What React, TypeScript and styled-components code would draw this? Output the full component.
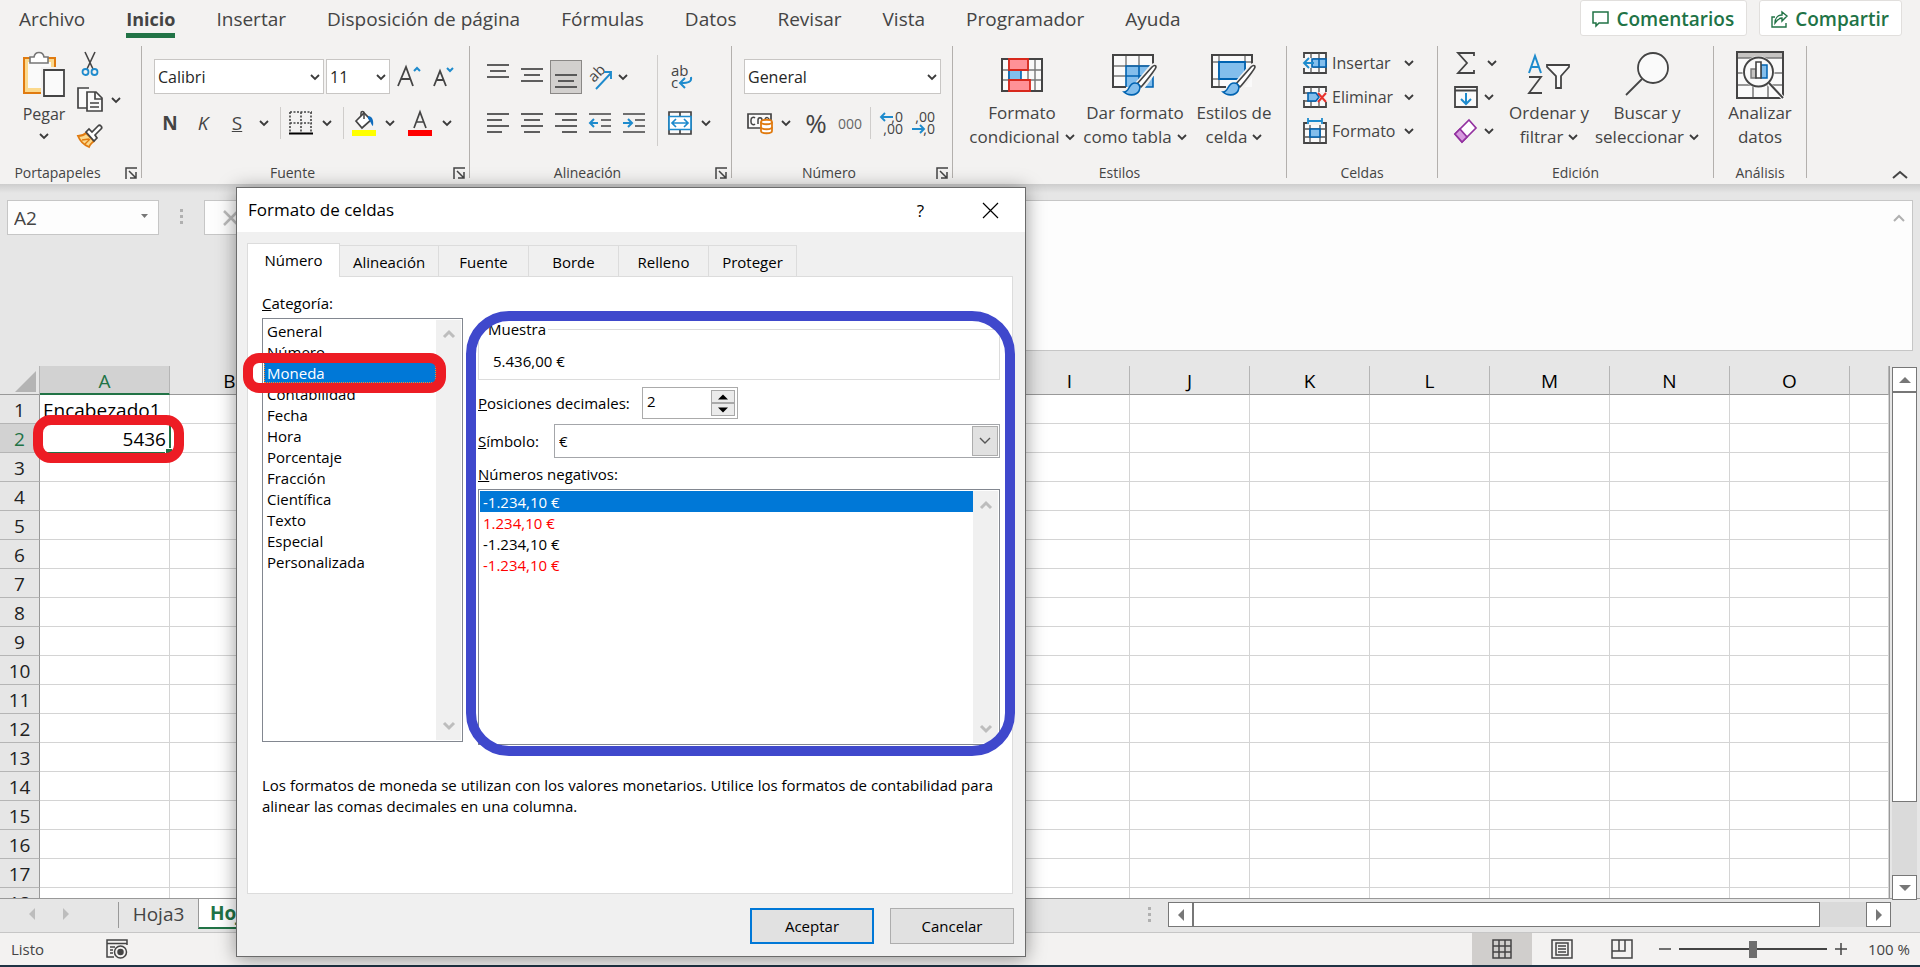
import React from "react";
import styled, { createGlobalStyle, css } from "styled-components";

const GREEN = "#217346";
const INK = "#444444";
const BLUE = "#1e8bcd";

const GlobalStyle = createGlobalStyle`
  *, *::before, *::after { box-sizing: border-box; }
  body { margin: 0; background: #e6e6e6; overflow: hidden; }
  body, button, input, select { font-family: "Open Sans", "Noto Sans", sans-serif; }
  button { border: 0; background: none; padding: 0; margin: 0; color: inherit; cursor: pointer; }
  svg { display: block; flex: none; overflow: visible; }
`;

const Page = styled.div`
  position: relative;
  display: flex;
  flex-direction: column;
  height: 100vh;
  color: ${INK};
`;

/* ---------- ribbon ---------- */

const Header = styled.header`
  background: #f3f2f1;
`;

const TabStrip = styled.nav`
  display: flex;
  height: 38px;
  padding: 0 18px 0 19px;
  gap: 41px;
`;

const RibbonTab = styled.a<{ $active?: boolean }>`
  color: ${INK};
  font-size: 19px;
  line-height: 38px;
  height: 38px;
  text-decoration: none;
  white-space: nowrap;
  font-weight: ${(p) => (p.$active ? 700 : 400)};
  ${(p) => p.$active && css`font-size: 18px; box-shadow: inset 0 -5px 0 ${GREEN};`}
`;

const StripActions = styled.div`
  display: flex;
  gap: 12px;
  margin-left: auto;
`;

const ShareButton = styled.button`
  display: flex;
  align-items: center;
  gap: 7px;
  height: 36px;
  padding: 1px 12px 0 11px;
  border: 1px solid #e1dfdd;
  border-radius: 3px;
  background: #fff;
  color: ${GREEN};
  font-size: 19px;
  font-weight: 600;
`;

const Ribbon = styled.div`
  display: flex;
  height: 146px;
  padding-top: 8px;
`;

const Group = styled.section<{ $w: number }>`
  display: flex;
  flex-direction: column;
  flex: 0 0 ${(p) => p.$w}px;
  background: linear-gradient(#b3b0ad, #b3b0ad) right top / 1px 132px no-repeat;
`;

const GroupBody = styled.div<{ $pad?: number }>`
  display: flex;
  height: 116px;
  padding-left: ${(p) => p.$pad ?? 0}px;
`;

const GroupFooter = styled.div`
  display: flex;
  align-items: center;
  height: 22px;
  padding-right: 1px;
  font-size: 14px;
  line-height: 20px;

  button { margin: 0 4px 0 10px; }
`;

const GroupName = styled.span`
  flex: 1;
  text-align: center;
  white-space: nowrap;
`;

const Rows = styled.div<{ $top?: number; $gap?: number }>`
  display: flex;
  flex-direction: column;
  padding-top: ${(p) => p.$top ?? 0}px;
  gap: ${(p) => p.$gap ?? 0}px;
`;

const Row = styled.div<{ $h?: number }>`
  display: flex;
  align-items: center;
  height: ${(p) => p.$h ?? 36}px;
`;

const Tool = styled.button<{ $w?: number; $h?: number }>`
  display: flex;
  align-items: center;
  justify-content: center;
  width: ${(p) => p.$w ?? 34}px;
  height: ${(p) => p.$h ?? 34}px;
  flex: none;
`;

const PressedTool = styled(Tool)`
  width: 32px;
  margin: 0 1px;
  border: 1px solid #8a8886;
  background: #d2d0ce;
`;

const LetterTool = styled(Tool)`
  font-size: 19px;
  line-height: 24px;
`;

const Percent = styled(Tool)`
  font-size: 26px;
`;

const Thousands = styled(Tool)`
  font-size: 14px;
  color: #666;
`;

const Rule = styled.span<{ $w: number; $h?: number }>`
  flex: none;
  width: ${(p) => p.$w}px;
  height: ${(p) => p.$h ?? 32}px;
  background: linear-gradient(#cfcdcb, #cfcdcb) center / 1px 100% no-repeat;
`;

const TallRule = styled(Rule)`
  height: 91px;
  margin-top: 9px;
`;

const ComboBox = styled.div<{ $w: number }>`
  position: relative;
  width: ${(p) => p.$w}px;
  height: 35px;
  margin-right: 2px;

  select {
    width: 100%;
    height: 100%;
    padding: 1px 0 0 3px;
    border: 1px solid #c8c6c4;
    border-radius: 0;
    background: #fff;
    color: #262626;
    font-size: 16px;
    appearance: none;
    outline: 0;
  }
  svg {
    position: absolute;
    right: 4px;
    top: 13px;
    pointer-events: none;
  }
`;

const BigButton = styled.button<{ $w: number; $top?: number }>`
  display: flex;
  flex-direction: column;
  align-items: center;
  width: ${(p) => p.$w}px;
  padding-top: 3px;
  font-size: 17px;
  line-height: 24px;
  white-space: nowrap;
`;

const BigIcon = styled.span`
  display: flex;
  align-items: center;
  justify-content: center;
  height: 52px;
`;

const BigLine = styled.span`
  display: flex;
  align-items: center;
  gap: 5px;
`;

const PasteButton = styled.button`
  display: flex;
  flex-direction: column;
  align-items: center;
  width: 64px;
  padding-top: 5px;
  font-size: 16px;
  line-height: 22px;
  gap: 6px;
`;

const CellButton = styled.button`
  display: flex;
  align-items: center;
  width: 128px;
  height: 34px;
  gap: 5px;
  font-size: 16px;
  text-align: left;

  span { width: 67px; }
`;

const Collapse = styled.button`
  align-self: flex-end;
  margin: 0 12px 4px auto;
`;

/* ---------- formula bar ---------- */

const FormulaBar = styled.div`
  display: flex;
  align-items: flex-start;
  height: 182px;
  padding: 16px 7px 0 7px;
  background: linear-gradient(#cdcdcd, #e6e6e6 9px);
`;

const NameBox = styled.label`
  position: relative;
  width: 152px;
  height: 35px;

  input {
    width: 100%;
    height: 100%;
    padding: 0 6px;
    border: 1px solid #c6c6c6;
    background: #fdfdfd;
    color: ${INK};
    font-size: 19px;
    outline: 0;
  }
  svg { position: absolute; right: 11px; top: 14px; }
`;

const Grip = styled.span<{ $m: number }>`
  width: 3px;
  height: 15px;
  margin: 9px ${(p) => p.$m}px 0;
  background: repeating-linear-gradient(#b0b0b0 0 3px, transparent 3px 6px);
`;

const BarGrip = styled(Grip)`
  margin-top: 8px;
  margin-right: 5px;
`;

const FormulaButtons = styled.div`
  display: flex;
  align-items: center;
  width: 110px;
  height: 35px;
  padding-left: 18px;
  border: 1px solid #c6c6c6;
  background: #fdfdfd;
`;

const FormulaField = styled.div`
  display: flex;
  flex: 1;
  height: 151px;
  margin-left: 4px;
  border: 1px solid #c6c6c6;
  background: #fdfdfd;

  input { flex: 1; border: 0; outline: 0; background: none; font-size: 19px; }
  button { align-self: flex-start; margin: 13px 7px 0 0; }
`;

/* ---------- sheet ---------- */

const SheetArea = styled.main`
  display: flex;
  flex: 1;
  min-height: 0;
`;

const GridFrame = styled.div`
  flex: 1;
  min-width: 0;
  overflow: hidden;
  border-right: 1px solid #999;
`;

const Grid = styled.table`
  width: 100%;
  table-layout: fixed;
  border-collapse: separate;
  border-spacing: 0;
  font-size: 19px;
  line-height: 24px;
  color: #000;

  th, td { padding: 2px 0 0; height: 29px; font-weight: 400; }
  thead th {
    border-right: 1px solid #b5b5b5;
    border-bottom: 1px solid #999;
    background: #e6e6e6;
  }
  td {
    background: #fff;
    border-right: 1px solid #d4d4d4;
    border-bottom: 1px solid #d4d4d4;
  }
`;

const ColumnHead = styled.th<{ $on?: boolean }>`
  ${(p) => p.$on && css`
    && { background: #d2d2d2; color: ${GREEN}; border-bottom: 2px solid ${GREEN}; }
  `}
`;

const CornerHead = styled.th`
  svg { margin-left: 15px; }
`;

const RowHead = styled.th<{ $on?: boolean }>`
  background: ${(p) => (p.$on ? "#d2d2d2" : "#e6e6e6")};
  color: ${(p) => (p.$on ? GREEN : "#222")};
  border-right: 1px solid #999;
  border-bottom: 1px solid #b5b5b5;
`;

const TextCell = styled.td`
  && { padding-left: 3px; white-space: nowrap; }
`;

const ActiveCell = styled.td`
  position: relative;
  && { padding-right: 3px; text-align: right; }

  &::before {
    content: "";
    position: absolute;
    inset: -2px -2px -2px -2px;
    border: 2px solid ${GREEN};
  }
  &::after {
    content: "";
    position: absolute;
    right: -3px;
    bottom: -3px;
    width: 7px;
    height: 7px;
    background: ${GREEN};
    border: 1px solid #fff;
    border-width: 1px 0 0 1px;
  }
`;

const VScroll = styled.div`
  display: flex;
  flex-direction: column;
  width: 25px;
  margin: 1px 3px -2px 2px;
  background: #dadada;
  z-index: 1;
`;

const ScrollButton = styled.button`
  display: flex;
  align-items: center;
  justify-content: center;
  flex: none;
  width: 25px;
  height: 25px;
  border: 1px solid #777;
  background: #fff;
`;

const VThumb = styled.div`
  flex: 410 1 0;
  border: 1px solid #777;
  background: #fff;
`;

const Track = styled.div<{ $grow: number }>`
  flex: ${(p) => p.$grow} 1 0;
`;

const TabBar = styled.div`
  display: flex;
  align-items: flex-start;
  height: 35px;
  border-top: 1px solid #999;
  border-bottom: 1px solid #c6c6c6;
  background: #e6e6e6;
`;

const SheetNav = styled.div`
  display: flex;
  align-items: center;
  gap: 22px;
  width: 118px;
  height: 30px;
  padding-left: 26px;
`;

const SheetTab = styled.button<{ $active?: boolean }>`
  height: ${(p) => (p.$active ? 30 : 26)}px;
  padding: 0 12px;
  font-size: 19px;
  line-height: 22px;
  color: ${INK};
  border-left: 1px solid #999;
  ${(p) =>
    p.$active
      ? css`
          padding: 0 11px;
          background: #fff;
          color: ${GREEN};
          font-weight: 700;
          border-bottom: 2px solid ${GREEN};
        `
      : css`
          width: 80px;
          margin-top: 3px;
          padding-bottom: 3px;
        `}
`;

const HScroll = styled.div`
  display: flex;
  width: 723px;
  height: 25px;
  margin: 3px 29px 0 0;
  background: #dadada;
`;

const HThumb = styled.div`
  flex: 627 1 0;
  border: 1px solid #777;
  background: #fff;
`;

const StatusBar = styled.footer`
  display: flex;
  align-items: center;
  height: 34px;
  padding: 0 10px 0 11px;
  border-bottom: 2px solid #1f3344;
  background: #f3f2f1;
  font-size: 15px;
  color: ${INK};
`;

const StatusText = styled.span`
  width: 95px;
`;

const Views = styled.div`
  display: flex;
  margin: 0 7px 0 auto;
`;

const ViewButton = styled.button<{ $on?: boolean }>`
  display: flex;
  align-items: center;
  justify-content: center;
  width: 60px;
  height: 32px;
  background: ${(p) => (p.$on ? "#d0cecc" : "none")};
`;

const ZoomRange = styled.input`
  width: 148px;
  height: 18px;
  margin: 0 8px;
  appearance: none;
  background: linear-gradient(#444, #444) center / 100% 2px no-repeat;

  &::-webkit-slider-thumb {
    appearance: none;
    width: 8px;
    height: 17px;
    background: #6e6e6e;
  }
`;

const ZoomValue = styled.span`
  width: 63px;
  text-align: right;
`;

/* ---------- dialog ---------- */

const Dialog = styled.section`
  position: absolute;
  left: 236px;
  top: 187px;
  width: 790px;
  border: 1px solid #6b6b6b;
  background: #f0f0f0;
  box-shadow: 0 2px 18px rgba(0, 0, 0, 0.4);
  color: #000;
  font-size: 15px;
  line-height: 20px;
  z-index: 2;
`;

const TitleBar = styled.div`
  display: flex;
  align-items: center;
  height: 44px;
  padding: 0 26px 0 11px;
  background: #fff;

  h2 { flex: 1; margin: 0; font-size: 17px; line-height: 24px; font-weight: 400; }
`;

const HelpButton = styled.button`
  margin-right: 58px;
  font-size: 17px;
`;

const DialogTabs = styled.div`
  display: flex;
  align-items: flex-end;
  height: 44px;
  padding: 0 10px;
`;

const DialogTab = styled.button<{ $w: number; $active?: boolean }>`
  width: ${(p) => p.$w}px;
  height: 31px;
  border: 1px solid #dcdcdc;
  border-width: 1px 1px 0 0;
  font-size: 15px;
  padding-top: 2px;
  ${(p) => p.$active && css`
    position: relative;
    height: 34px;
    margin-bottom: -1px;
    padding: 0 0 1px;
    border-width: 1px 1px 0 1px;
    background: #fff;
  `}
`;

const Panel = styled.div`
  height: 618px;
  margin: 0 12px 0 10px;
  padding: 16px 12px 0 14px;
  border: 1px solid #dcdcdc;
  background: #fff;
`;

const Columns = styled.div`
  display: flex;
  gap: 15px;
`;

const CategoryColumn = styled.div`
  width: 201px;
`;

const OptionsColumn = styled.div`
  flex: 1;
  padding-top: 26px;
`;

const ListBox = styled.div<{ $h: number; $top: number }>`
  display: flex;
  height: ${(p) => p.$h}px;
  margin-top: ${(p) => p.$top}px;
  padding: 1px;
  border: 1px solid #828790;

  ul { flex: 1; margin: 0; padding: 0; list-style: none; }
`;

const Option = styled.li<{ $on?: boolean; $red?: boolean; $dotted?: boolean }>`
  height: 21px;
  padding: 1px 0 0 3px;
  line-height: 20px;
  color: ${(p) => (p.$on ? "#fff" : p.$red ? "#f00" : "#000")};
  background: ${(p) => (p.$on ? "#0078d7" : "none")};
  outline: ${(p) => (p.$dotted ? "1px dotted #ff8728" : "0")};
  outline-offset: -1px;
`;

const ListScroll = styled.div`
  display: flex;
  flex-direction: column;
  align-items: center;
  justify-content: space-between;
  width: 25px;
  padding: 8px 0;
  background: #f0f0f0;
`;

const Sample = styled.fieldset`
  height: 61px;
  margin: 0;
  padding: 11px 7px 0;
  border: 1px solid #dcdcdc;

  legend { padding: 0 2px; }
  output { display: block; padding-left: 7px; line-height: 22px; }
`;

const Field = styled.div<{ $top: number; $h: number; $label: number }>`
  display: flex;
  align-items: center;
  height: ${(p) => p.$h}px;
  margin-top: ${(p) => p.$top}px;

  label { width: ${(p) => p.$label}px; flex: none; }
`;

const Spinner = styled.div`
  display: flex;
  width: 96px;
  height: 32px;
  padding: 2px;
  border: 1px solid #ababab;

  input { flex: 1; min-width: 0; border: 0; padding: 0 2px 4px; font-size: 15px; outline: 0; }
`;

const SpinButtons = styled.div`
  display: grid;
  grid-template-rows: 1fr 1fr;
  width: 24px;

  button {
    display: flex;
    align-items: center;
    justify-content: center;
    border: 1px solid #a9a9a9;
    background: #ebebeb;
  }
`;

const SymbolSelect = styled.div`
  position: relative;
  flex: 1;
  height: 34px;

  select {
    width: 100%;
    height: 100%;
    padding: 0 4px;
    border: 1px solid #a4a6aa;
    border-radius: 0;
    background: #fff;
    color: #000;
    font-size: 15px;
    appearance: none;
  }
  span {
    position: absolute;
    top: 2px;
    right: 2px;
    bottom: 2px;
    display: flex;
    align-items: center;
    justify-content: center;
    width: 26px;
    border: 1px solid #adadad;
    background: #e1e1e1;
    pointer-events: none;
  }
`;

const NegativeLabel = styled.div`
  margin-top: 6px;
`;

const Description = styled.p`
  margin: 30px 0 0;
  line-height: 21px;
`;

const DialogFooter = styled.div`
  display: flex;
  justify-content: flex-end;
  gap: 16px;
  padding: 14px 11px 12px 0;
`;

const DialogButton = styled.button<{ $primary?: boolean }>`
  width: 124px;
  height: 36px;
  border: ${(p) => (p.$primary ? "2px solid #0078d7" : "1px solid #adadad")};
  background: #e1e1e1;
  font-size: 15px;
`;

const Ring = styled.div<{ $x: number; $y: number; $w: number; $h: number; $r: number; $color: string }>`
  position: absolute;
  left: ${(p) => p.$x}px;
  top: ${(p) => p.$y}px;
  width: ${(p) => p.$w}px;
  height: ${(p) => p.$h}px;
  border: 10px solid ${(p) => p.$color};
  border-radius: ${(p) => p.$r}px;
  pointer-events: none;
  z-index: 3;
`;

/* ---------- icons ---------- */

const Chev = () => (
  <svg width="10" height="10" viewBox="0 0 10 10" fill="none" stroke="#3b3b3b" strokeWidth="1.8">
    <path d="M1 3l4 4 4-4" />
  </svg>
);

const ListChev = ({ up }: { up?: boolean }) => (
  <svg width="12" height="12" viewBox="0 0 12 12" fill="none" stroke="#bdbdbd" strokeWidth="3">
    <path d={up ? "M1 9l5-5 5 5" : "M1 3l5 5 5-5"} />
  </svg>
);

const Tri = ({ dir, color = "#777", size = 12 }: { dir: "up" | "down" | "left" | "right"; color?: string; size?: number }) => {
  const d = { up: "M0 9h12L6 3z", down: "M0 3h12L6 9z", left: "M9 0v12L3 6z", right: "M3 0v12l6-6z" }[dir];
  return (
    <svg width={size} height={size} viewBox="0 0 12 12" fill={color}>
      <path d={d} />
    </svg>
  );
};

const Launcher = () => (
  <svg width="12" height="12" viewBox="0 0 12 12" fill="none" stroke={INK} strokeWidth="1.5">
    <path d="M1 12V1h11M4 4l7 7M11 5v6H5" />
  </svg>
);

const PasteIcon = () => (
  <svg width="42" height="46" viewBox="0 0 42 46" fill="none">
    <path d="M1 7h31v11H20v24H1z" fill="#fbd98d" stroke="#e07b10" strokeWidth="2" />
    <path d="M5 11h23v8h-8v18H5z" fill="#fafafa" />
    <path d="M18 16h24v30H18z" fill="#f3f2f1" />
    <path d="M7 12V6h4c1-6 9-6 10 0h4v6z" fill="#fff" stroke="#777" strokeWidth="1.6" />
    <path d="M21 19h20v26H21z" fill="#fafafa" stroke="#444" strokeWidth="1.8" />
  </svg>
);

const CutIcon = () => (
  <svg width="18" height="26" viewBox="0 0 18 26" fill="none">
    <path d="M4 1l8 17M14 1L6 18" stroke="#444" strokeWidth="1.6" />
    <circle cx="4.500" cy="21" r="3" stroke={BLUE} strokeWidth="1.8" />
    <circle cx="13.500" cy="21" r="3" stroke={BLUE} strokeWidth="1.8" />
  </svg>
);

const CopyIcon = () => (
  <svg width="26" height="26" viewBox="0 0 26 26" fill="#fafafa" stroke="#444" strokeWidth="1.7">
    <path d="M10 21H1V1h11" />
    <path d="M10 5h9l6 6v13H10z" />
    <path d="M18 5v7h7M13 16h9M13 20h9" fill="none" />
  </svg>
);

const BrushIcon = () => (
  <svg width="26" height="24" viewBox="0 0 26 24" fill="none">
    <path d="M1 12c4 0 6-1 8-3l8 8c-2 2-4 3-5 6C7 21 3 17 1 12z" fill="#fbd98d" stroke="#e07b10" strokeWidth="1.8" />
    <path d="M5 16l7-1M8 20l5-5" stroke="#e07b10" strokeWidth="1.4" />
    <path d="M9 8l3-3 3 3 6-6c2-2 5 1 3 3l-6 6 2 3-3 3z" fill="#fff" stroke="#444" strokeWidth="1.7" />
  </svg>
);

const FontSizeIcon = ({ grow }: { grow?: boolean }) => (
  <svg width="24" height="26" viewBox="0 0 24 26" fill="none" stroke="#444" strokeWidth="1.8">
    {grow ? (
      <>
        <path d="M1 22L9 3l7 19M4 15h10" />
        <path d="M17 7l3-3 3 3" stroke={BLUE} strokeWidth="2" />
      </>
    ) : (
      <>
        <path d="M3 22L9 7l6 15M5 16h8" />
        <path d="M16 4l3 3 3-3" stroke={BLUE} strokeWidth="2" />
      </>
    )}
  </svg>
);

const BorderIcon = () => (
  <svg width="24" height="24" viewBox="0 0 24 24" fill="none" stroke="#444" strokeWidth="1.6">
    <path d="M1 1h22M1 1v20M22 1v20M12 1v20M1 12h22" strokeDasharray="2 1.500" />
    <path d="M0 22.500h24" stroke="#000" strokeWidth="2" />
  </svg>
);

const FillIcon = () => (
  <svg width="24" height="26" viewBox="0 0 24 26" fill="none">
    <path d="M4 11l8-8 7 7-9 8z" fill="#fff" stroke="#444" strokeWidth="1.7" />
    <path d="M9 6V3c0-2 3-2 3 0v6" stroke="#444" strokeWidth="1.5" />
    <path d="M16 6c4 0 6 4 5 10-2-1-2-5-5-7z" fill="#0f6cbd" />
    <path d="M0 20h24v6H0z" fill="#ff0" />
  </svg>
);

const FontColorIcon = () => (
  <svg width="24" height="26" viewBox="0 0 24 26" fill="none">
    <path d="M6 18l6-16 6 16M8 12h8" stroke="#444" strokeWidth="1.7" />
    <path d="M0 20h24v6H0z" fill="#f00" />
  </svg>
);

const Lines = ({ rows, h = 22 }: { rows: [number, number, number][]; h?: number }) => (
  <svg width="22" height={h} viewBox={`0 0 22 ${h}`} stroke="#444" strokeWidth="1.7">
    {rows.map(([y, a, b]) => (
      <path key={y} d={`M${a} ${y}H${b}`} />
    ))}
  </svg>
);

const IndentIcon = ({ inc }: { inc?: boolean }) => (
  <svg width="22" height="22" viewBox="0 0 22 22" fill="none" stroke="#444" strokeWidth="1.7">
    <path d="M0 2h22M12 8h10M12 14h10M0 20h22" />
    <path d={inc ? "M0 11h9M5 7l4 4-4 4" : "M9 11H1M5 7l-4 4 4 4"} stroke={BLUE} strokeWidth="2" />
  </svg>
);

const SvgText = styled.text`
  font-family: "Open Sans", sans-serif;
`;

const OrientationIcon = () => (
  <svg width="26" height="26" viewBox="0 0 26 26" fill="none">
    <SvgText x="0" y="0" fontSize="15" fill="#444" transform="translate(7 19) rotate(-45)">ab</SvgText>
    <path d="M9 25L24 9M17 8h7v7" stroke={BLUE} strokeWidth="1.9" />
  </svg>
);

const WrapIcon = () => (
  <svg width="24" height="28" viewBox="0 0 24 28" fill="none">
    <SvgText x="2" y="13" fontSize="15" fill="#444">ab</SvgText>
    <SvgText x="2" y="25" fontSize="15" fill="#444">c</SvgText>
    <path d="M22 14c1 5-3 6-10 6M16 15l-5 5 5 5" stroke={BLUE} strokeWidth="2" />
  </svg>
);

const MergeIcon = () => (
  <svg width="24" height="24" viewBox="0 0 24 24" fill="none" stroke="#444" strokeWidth="1.7">
    <path d="M1 1h22v22H1zM12 1v5M12 18v5" fill="#fafafa" />
    <path d="M1 5.500h22v13H1z" fill="#fff" stroke={BLUE} />
    <path d="M5 12h14M8 8l-4 4 4 4M16 8l4 4-4 4" stroke={BLUE} />
  </svg>
);

const MoneyIcon = () => (
  <svg width="26" height="22" viewBox="0 0 26 22" fill="none">
    <path d="M1 2h23v14H1z" fill="#fafafa" stroke="#444" strokeWidth="1.7" />
    <path d="M8 6c-1-1-4-1-4 2v2c0 3 3 3 4 2" stroke="#444" strokeWidth="1.5" />
    <path d="M11 12V8c0-3 4-3 4 0M22 8c0-3-3-3-4-1" stroke="#444" strokeWidth="1.5" />
    <path d="M14 10c0-3 11-3 11 0v9c0 3-11 3-11 0z" fill="#fff" stroke="#e07b10" strokeWidth="1.8" />
    <path d="M14 10c0 3 11 3 11 0M14 15c0 3 11 3 11 0" stroke="#e07b10" strokeWidth="1.8" />
  </svg>
);

const DecimalIcon = ({ more }: { more?: boolean }) => (
  <svg width="25" height="26" viewBox="0 0 25 26" fill="none">
    <SvgText x="24" y="12" fontSize="14" textAnchor="end" fill="#444">{more ? ",0" : ",00"}</SvgText>
    <SvgText x="24" y="24" fontSize="14" textAnchor="end" fill="#444">{more ? ",00" : ",0"}</SvgText>
    <path
      d={more ? "M14 7H2M6 3L2 7l4 4" : "M1 19h12M9 15l4 4-4 4"}
      stroke={BLUE}
      strokeWidth="1.9"
    />
  </svg>
);

const CondIcon = () => (
  <svg width="42" height="34" viewBox="0 0 42 34" fill="none">
    <path d="M1 1h40v32H1z" fill="#fafafa" />
    <path d="M1 12h40M1 22h40M8 1v32M34 1v32M27 1v32" stroke="#777" strokeWidth="1.4" />
    <path d="M1 1h40v32H1z" stroke="#444" strokeWidth="2" />
    <path d="M8 12h12v10H8z" fill="#83beec" stroke="#0063b1" strokeWidth="1.6" />
    <path d="M8 1h19v11H8zM8 22h21v11H8z" fill="#ff9197" stroke="#d8281c" strokeWidth="1.8" />
  </svg>
);

const PaintBrush = () => (
  <g>
    <path d="M24 31L39 13c2-2 5-3 6-1 0 3-14 21-15 22z" fill="#fafafa" stroke="#f3f2f1" strokeWidth="4" />
    <path d="M25 30L40 13c2-2 4-2 4 0 0 2-13 18-15 20z" fill="#fff" stroke="#444" strokeWidth="1.7" />
    <path d="M12 38c6 0 4-9 11-9 5 0 6 5 4 8-3 5-11 5-15 1z" fill="#83beec" stroke="#0063b1" strokeWidth="1.6" />
  </g>
);

const TableStyleIcon = () => (
  <svg width="46" height="42" viewBox="0 0 46 42" fill="none">
    <path d="M1 1h40v32H1z" fill="#fafafa" />
    <path d="M14 12h27v21H14z" fill="#83beec" />
    <path d="M1 12h40M1 22h13M14 1v11M27 1v11" stroke="#777" strokeWidth="1.4" />
    <path d="M14 33V12h27M27 12v21M14 22h27M41 22v11h-9" stroke="#0063b1" strokeWidth="1.6" />
    <path d="M41 12V1H1v32h13" stroke="#444" strokeWidth="2" />
    <PaintBrush />
  </svg>
);

const CellStyleIcon = () => (
  <svg width="46" height="42" viewBox="0 0 46 42" fill="none">
    <path d="M1 1h40v32H1z" fill="#fafafa" />
    <path d="M1 8h40M1 25h30M8 1v32M34 1v28" stroke="#777" strokeWidth="1.4" />
    <path d="M8 8h26v17H8z" fill="#83beec" stroke="#0063b1" strokeWidth="1.8" />
    <path d="M41 12V1H1v32h14" stroke="#444" strokeWidth="2" />
    <PaintBrush />
  </svg>
);

const CellGrid = () => (
  <>
    <path d="M1 2h22v20H1z" fill="#fafafa" stroke="#444" strokeWidth="1.8" />
    <path d="M8 2v20M16 2v20M1 8h22M1 16h22" stroke="#555" strokeWidth="1.3" />
  </>
);

const InsertIcon = () => (
  <svg width="24" height="24" viewBox="0 0 24 24" fill="none">
    <CellGrid />
    <path d="M0 7h10v10H0z" fill="#f3f2f1" />
    <path d="M9 8h14v8H9zM16 8v8" fill="#83beec" stroke="#0063b1" strokeWidth="1.6" />
    <path d="M11 12H1M6 7l-5 5 5 5" stroke={BLUE} strokeWidth="1.9" />
  </svg>
);

const DeleteIcon = () => (
  <svg width="24" height="24" viewBox="0 0 24 24" fill="none">
    <CellGrid />
    <path d="M0 9h4v6H0zM13 7h11v10H13z" fill="#f3f2f1" />
    <path d="M5 8h8l3 4-3 4H5z" fill="#83beec" stroke="#0063b1" strokeWidth="1.6" />
    <path d="M15 8l8 9M23 8l-8 9" stroke="#e8302a" strokeWidth="2" />
  </svg>
);

const FormatIcon = () => (
  <svg width="24" height="26" viewBox="0 0 24 26" fill="none">
    <path d="M1 5h22v20H1z" fill="#fafafa" stroke="#444" strokeWidth="1.8" />
    <path d="M7 5v20M17 5v20M1 11h22M1 19h22" stroke="#555" strokeWidth="1.3" />
    <path d="M4 0h16v7H4z" fill="#f3f2f1" />
    <path d="M7 11h10v8H7z" fill="#83beec" stroke="#0063b1" strokeWidth="1.7" />
    <path d="M5 3h14M5 0v6M19 0v6" stroke={BLUE} strokeWidth="1.8" />
  </svg>
);

const SumIcon = () => (
  <svg width="20" height="24" viewBox="0 0 20 24" fill="none" stroke="#444" strokeWidth="1.8">
    <path d="M18 5V2H2l9 10-9 10h16v-3" />
  </svg>
);

const FillDownIcon = () => (
  <svg width="24" height="22" viewBox="0 0 24 22" fill="none" stroke="#444" strokeWidth="1.8">
    <path d="M1 1h22v20H1zM1 4.500h22" fill="#fafafa" />
    <path d="M12 7v11M7 13l5 5 5-5" stroke={BLUE} strokeWidth="2" />
  </svg>
);

const EraserIcon = () => (
  <svg width="24" height="24" viewBox="0 0 24 24" stroke="#9332a0" strokeWidth="1.7">
    <path d="M15 1l7 8L8 23l-7-8z" fill="#fff" />
    <path d="M6 10l7 8-5 5-7-8z" fill="#d79adf" />
  </svg>
);

const SortIcon = () => (
  <svg width="44" height="42" viewBox="0 0 44 42" fill="none" stroke="#444" strokeWidth="1.8">
    <path d="M2 19L8 2l6 17M4 13h8" stroke={BLUE} strokeWidth="2" />
    <path d="M2 23h12L2 39h13" />
    <path d="M20 11h22v2l-8 9v12h-5V22l-9-9z" fill="#fafafa" />
  </svg>
);

const FindIcon = () => (
  <svg width="46" height="46" viewBox="0 0 46 46" fill="none" stroke="#444" strokeWidth="1.8">
    <circle cx="29" cy="16" r="15" fill="#fafafa" />
    <path d="M18 27L2 43" />
  </svg>
);

const AnalyzeIcon = () => (
  <svg width="48" height="48" viewBox="0 0 48 48" fill="none">
    <path d="M1 1h46v46H1z" fill="#fafafa" />
    <path d="M1 1h46v6H1z" fill="#c6c4c2" />
    <path d="M1 7h46M1 22h46M1 34h46M17 34v13M32 34v13" stroke="#777" strokeWidth="1.5" />
    <path d="M1 1h46v46H1z" stroke="#444" strokeWidth="2" />
    <circle cx="22.500" cy="21" r="16" fill="#fafafa" />
    <path d="M32 32l16 16" stroke="#fafafa" strokeWidth="4" />
    <circle cx="22.500" cy="21" r="14.500" fill="#fafafa" stroke="#444" strokeWidth="1.9" />
    <path d="M33 32l14 15" stroke="#444" strokeWidth="2" />
    <path d="M15 18h5v9h-5z" fill="#c6c4c2" stroke="#777" strokeWidth="1.4" />
    <path d="M25 14h6v13h-6z" fill="#83beec" stroke="#0063b1" strokeWidth="1.5" />
    <path d="M20 11h5v16h-5z" fill="#fff" stroke="#444" strokeWidth="1.6" />
  </svg>
);

const CommentIcon = () => (
  <svg width="17" height="16" viewBox="0 0 17 16" fill="none" stroke={GREEN} strokeWidth="1.5">
    <path d="M1 1h15v11H7l-3 3v-3H1z" />
  </svg>
);

const ShareIcon = () => (
  <svg width="17" height="18" viewBox="0 0 17 18" fill="none" stroke={GREEN} strokeWidth="1.4">
    <path d="M4 7H1v10h14v-4M4 13c0-5 3-8 7-8V2l5 4-5 5V8c-3 0-5 2-7 5z" />
  </svg>
);

const MacroIcon = () => (
  <svg width="22" height="20" viewBox="0 0 22 20" fill="none" stroke="#444" strokeWidth="1.5">
    <path d="M21 6V1H1v17h7M1 4.500h20M4 8h5M4 11h3M4 14h3" />
    <circle cx="14.500" cy="13" r="6" fill="#f3f2f1" />
    <circle cx="14.500" cy="13" r="2.500" fill="#444" />
  </svg>
);

/* ---------- ribbon content ---------- */

const GroupFoot = ({ name, launcher }: { name: string; launcher?: boolean }) => (
  <GroupFooter>
    <GroupName>{name}</GroupName>
    {launcher && (
      <button aria-label={`Más opciones de ${name}`}>
        <Launcher />
      </button>
    )}
  </GroupFooter>
);

const Combo = ({ w, value, label }: { w: number; value: string; label: string }) => (
  <ComboBox $w={w}>
    <select aria-label={label} defaultValue={value}>
      <option>{value}</option>
    </select>
    <Chev />
  </ComboBox>
);

const Big = ({ w, icon, a, b, menu = true }: { w: number; icon: React.ReactNode; a: string; b: string; menu?: boolean }) => (
  <BigButton $w={w}>
    <BigIcon>{icon}</BigIcon>
    <BigLine>{a}</BigLine>
    <BigLine>
      {b}
      {menu && <Chev />}
    </BigLine>
  </BigButton>
);

const ribbonTabs = ["Archivo", "Inicio", "Insertar", "Disposición de página", "Fórmulas", "Datos", "Revisar", "Vista", "Programador", "Ayuda"];

const RibbonBar = () => (
  <Ribbon>
    <Group $w={142}>
      <GroupBody $pad={12}>
        <PasteButton>
          <PasteIcon />
          Pegar
          <Chev />
        </PasteButton>
        <Rows>
          <Row><Tool $w={28} aria-label="Cortar"><CutIcon /></Tool></Row>
          <Row>
            <Tool $w={28} aria-label="Copiar"><CopyIcon /></Tool>
            <Tool $w={24} aria-label="Opciones de copiar"><Chev /></Tool>
          </Row>
          <Row><Tool $w={28} aria-label="Copiar formato"><BrushIcon /></Tool></Row>
        </Rows>
      </GroupBody>
      <GroupFoot name="Portapapeles" launcher />
    </Group>

    <Group $w={328}>
      <GroupBody $pad={12}>
        <Rows $top={13} $gap={11}>
          <Row $h={35}>
            <Combo w={170} value="Calibri" label="Fuente" />
            <Combo w={64} value="11" label="Tamaño de fuente" />
            <Tool $w={34} aria-label="Aumentar tamaño"><FontSizeIcon grow /></Tool>
            <Tool $w={34} aria-label="Disminuir tamaño"><FontSizeIcon /></Tool>
          </Row>
          <Row>
            <LetterTool $w={32}><b>N</b></LetterTool>
            <LetterTool $w={34}><i>K</i></LetterTool>
            <LetterTool $w={34}><u>S</u></LetterTool>
            <Tool $w={20} aria-label="Opciones de subrayado"><Chev /></Tool>
            <Rule $w={13} />
            <Tool $w={27} aria-label="Bordes"><BorderIcon /></Tool>
            <Tool $w={26} aria-label="Opciones de bordes"><Chev /></Tool>
            <Rule $w={7} />
            <Tool $w={34} aria-label="Color de relleno"><FillIcon /></Tool>
            <Tool $w={18} aria-label="Opciones de relleno"><Chev /></Tool>
            <Tool $w={42} aria-label="Color de fuente"><FontColorIcon /></Tool>
            <Tool $w={12} aria-label="Opciones de color"><Chev /></Tool>
          </Row>
        </Rows>
      </GroupBody>
      <GroupFoot name="Fuente" launcher />
    </Group>

    <Group $w={262}>
      <GroupBody $pad={11}>
        <Rows $top={13} $gap={11}>
          <Row $h={35}>
            <Tool aria-label="Alinear arriba"><Lines h={26} rows={[[1, 0, 22], [7, 3, 19], [13, 0, 22]]} /></Tool>
            <Tool aria-label="Alinear en medio"><Lines h={26} rows={[[5, 0, 22], [11, 3, 19], [17, 0, 22]]} /></Tool>
            <PressedTool aria-label="Alinear abajo"><Lines h={26} rows={[[11, 0, 22], [17, 3, 19], [23, 0, 22]]} /></PressedTool>
            <Tool aria-label="Orientación"><OrientationIcon /></Tool>
            <Tool $w={12} aria-label="Opciones de orientación"><Chev /></Tool>
          </Row>
          <Row>
            <Tool aria-label="Alinear a la izquierda"><Lines rows={[[2, 0, 22], [8, 0, 15], [14, 0, 22], [20, 0, 15]]} /></Tool>
            <Tool aria-label="Centrar"><Lines rows={[[2, 0, 22], [8, 3, 19], [14, 0, 22], [20, 3, 19]]} /></Tool>
            <Tool aria-label="Alinear a la derecha"><Lines rows={[[2, 0, 22], [8, 7, 22], [14, 0, 22], [20, 7, 22]]} /></Tool>
            <Tool aria-label="Disminuir sangría"><IndentIcon /></Tool>
            <Tool aria-label="Aumentar sangría"><IndentIcon inc /></Tool>
          </Row>
        </Rows>
        <TallRule $w={13} />
        <Rows $top={13} $gap={11}>
          <Row $h={35}><Tool aria-label="Ajustar texto"><WrapIcon /></Tool></Row>
          <Row>
            <Tool $w={32} aria-label="Combinar y centrar"><MergeIcon /></Tool>
            <Tool $w={20} aria-label="Opciones de combinar"><Chev /></Tool>
          </Row>
        </Rows>
      </GroupBody>
      <GroupFoot name="Alineación" launcher />
    </Group>

    <Group $w={221}>
      <GroupBody $pad={12}>
        <Rows $top={13} $gap={11}>
          <Row $h={35}><Combo w={197} value="General" label="Formato de número" /></Row>
          <Row>
            <Tool $w={32} aria-label="Formato de contabilidad"><MoneyIcon /></Tool>
            <Tool $w={20} aria-label="Opciones de moneda"><Chev /></Tool>
            <Percent $w={40}>%</Percent>
            <Thousands $w={28}>000</Thousands>
            <Rule $w={13} />
            <Tool $w={28} aria-label="Aumentar decimales"><DecimalIcon more /></Tool>
            <Tool $w={36} aria-label="Disminuir decimales"><DecimalIcon /></Tool>
          </Row>
        </Rows>
      </GroupBody>
      <GroupFoot name="Número" launcher />
    </Group>

    <Group $w={334}>
      <GroupBody $pad={13}>
        <Big w={112} icon={<CondIcon />} a="Formato" b="condicional" />
        <Big w={114} icon={<TableStyleIcon />} a="Dar formato" b="como tabla" />
        <Big w={84} icon={<CellStyleIcon />} a="Estilos de" b="celda" />
      </GroupBody>
      <GroupFoot name="Estilos" />
    </Group>

    <Group $w={151}>
      <GroupBody $pad={16}>
        <Rows>
          <CellButton><InsertIcon /><span>Insertar</span><Chev /></CellButton>
          <CellButton><DeleteIcon /><span>Eliminar</span><Chev /></CellButton>
          <CellButton><FormatIcon /><span>Formato</span><Chev /></CellButton>
        </Rows>
      </GroupBody>
      <GroupFoot name="Celdas" />
    </Group>

    <Group $w={276}>
      <GroupBody $pad={12}>
        <Rows>
          <Row $h={34}>
            <Tool $w={32} aria-label="Autosuma"><SumIcon /></Tool>
            <Tool $w={20} aria-label="Opciones de suma"><Chev /></Tool>
          </Row>
          <Row $h={34}>
            <Tool $w={32} aria-label="Rellenar"><FillDownIcon /></Tool>
            <Tool $w={14} aria-label="Opciones de rellenar"><Chev /></Tool>
          </Row>
          <Row $h={34}>
            <Tool $w={32} aria-label="Borrar"><EraserIcon /></Tool>
            <Tool $w={14} aria-label="Opciones de borrar"><Chev /></Tool>
          </Row>
        </Rows>
        <Big w={94} icon={<SortIcon />} a="Ordenar y" b="filtrar" />
        <Big w={102} icon={<FindIcon />} a="Buscar y" b="seleccionar" />
      </GroupBody>
      <GroupFoot name="Edición" />
    </Group>

    <Group $w={93}>
      <GroupBody>
        <Big w={92} icon={<AnalyzeIcon />} a="Analizar" b="datos" menu={false} />
      </GroupBody>
      <GroupFoot name="Análisis" />
    </Group>

    <Collapse aria-label="Contraer la cinta">
      <svg width="16" height="10" viewBox="0 0 16 10" fill="none" stroke="#444" strokeWidth="2">
        <path d="M1 8l7-6 7 6" />
      </svg>
    </Collapse>
  </Ribbon>
);

/* ---------- data ---------- */

const columns = ["A", "B", "C", "D", "E", "F", "G", "H", "I", "J", "K", "L", "M", "N", "O"];
const rowNumbers = Array.from({ length: 18 }, (_, i) => i + 1);

const categories = ["General", "Número", "Moneda", "Contabilidad", "Fecha", "Hora", "Porcentaje", "Fracción", "Científica", "Texto", "Especial", "Personalizada"];

const negatives = [
  { text: "-1.234,10 €", on: true },
  { text: "1.234,10 €", red: true },
  { text: "-1.234,10 €" },
  { text: "-1.234,10 €", red: true },
];

const dialogTabs: [string, number][] = [["Número", 93], ["Alineación", 99], ["Fuente", 90], ["Borde", 90], ["Relleno", 90], ["Proteger", 88]];

const FormatDialog = () => (
  <Dialog role="dialog" aria-label="Formato de celdas">
    <TitleBar>
      <h2>Formato de celdas</h2>
      <HelpButton aria-label="Ayuda">?</HelpButton>
      <button aria-label="Cerrar">
        <svg width="17" height="17" viewBox="0 0 17 17" stroke="#000" strokeWidth="1.200">
          <path d="M1 1l15 15M16 1L1 16" />
        </svg>
      </button>
    </TitleBar>
    <DialogTabs role="tablist">
      {dialogTabs.map(([name, w], i) => (
        <DialogTab key={name} role="tab" $w={w} $active={i === 0}>{name}</DialogTab>
      ))}
    </DialogTabs>
    <Panel>
      <Columns>
        <CategoryColumn>
          <div id="cat"><u>C</u>ategoría:</div>
          <ListBox $h={424} $top={5}>
            <ul role="listbox" aria-labelledby="cat">
              {categories.map((c) => (
                <Option key={c} role="option" $on={c === "Moneda"} $dotted={c === "Moneda"}>{c}</Option>
              ))}
            </ul>
            <ListScroll><ListChev up /><ListChev /></ListScroll>
          </ListBox>
        </CategoryColumn>
        <OptionsColumn>
          <Sample>
            <legend>Muestra</legend>
            <output>5.436,00 €</output>
          </Sample>
          <Field $top={7} $h={32} $label={164}>
            <label htmlFor="dec"><u>P</u>osiciones decimales:</label>
            <Spinner>
              <input id="dec" defaultValue="2" />
              <SpinButtons>
                <button aria-label="Más"><Tri dir="up" color="#000" size={10} /></button>
                <button aria-label="Menos"><Tri dir="down" color="#000" size={10} /></button>
              </SpinButtons>
            </Spinner>
          </Field>
          <Field $top={5} $h={34} $label={76}>
            <label htmlFor="sym"><u>S</u>ímbolo:</label>
            <SymbolSelect>
              <select id="sym" defaultValue="€"><option>€</option></select>
              <span>
                <svg width="12" height="8" viewBox="0 0 12 8" fill="none" stroke="#555" strokeWidth="1.400">
                  <path d="M1 1l5 5 5-5" />
                </svg>
              </span>
            </SymbolSelect>
          </Field>
          <NegativeLabel id="neg"><u>N</u>úmeros negativos:</NegativeLabel>
          <ListBox $h={256} $top={5}>
            <ul role="listbox" aria-labelledby="neg">
              {negatives.map((n, i) => (
                <Option key={i} role="option" $on={n.on} $red={n.red}>{n.text}</Option>
              ))}
            </ul>
            <ListScroll><ListChev up /><ListChev /></ListScroll>
          </ListBox>
        </OptionsColumn>
      </Columns>
      <Description>
        Los formatos de moneda se utilizan con los valores monetarios. Utilice los formatos de contabilidad para
        alinear las comas decimales en una columna.
      </Description>
    </Panel>
    <DialogFooter>
      <DialogButton $primary>Aceptar</DialogButton>
      <DialogButton>Cancelar</DialogButton>
    </DialogFooter>
  </Dialog>
);

export default function App() {
  return (
    <Page>
      <GlobalStyle />
      <Header>
        <TabStrip>
          {ribbonTabs.map((t) => (
            <RibbonTab key={t} href="#" $active={t === "Inicio"}>{t}</RibbonTab>
          ))}
          <StripActions>
            <ShareButton><CommentIcon />Comentarios</ShareButton>
            <ShareButton><ShareIcon />Compartir</ShareButton>
          </StripActions>
        </TabStrip>
        <RibbonBar />
      </Header>

      <FormulaBar>
        <NameBox>
          <input aria-label="Cuadro de nombres" defaultValue="A2" />
          <svg width="7" height="5" viewBox="0 0 7 5" fill="#777"><path d="M0 0h7L3.500 4z" /></svg>
        </NameBox>
        <Grip $m={21} />
        <FormulaButtons>
          <button aria-label="Cancelar">
            <svg width="16" height="16" viewBox="0 0 16 16" stroke="#bbb" strokeWidth="2.500"><path d="M1 1l14 14M15 1L1 15" /></svg>
          </button>
        </FormulaButtons>
        <FormulaField>
          <input aria-label="Barra de fórmulas" />
          <button aria-label="Contraer barra de fórmulas">
            <svg width="12" height="8" viewBox="0 0 12 8" fill="none" stroke="#b0b0b0" strokeWidth="2"><path d="M1 7l5-5 5 5" /></svg>
          </button>
        </FormulaField>
      </FormulaBar>

      <SheetArea>
        <GridFrame>
          <Grid>
            <colgroup>
              <col width="40" />
              <col width="130" />
              {columns.slice(1).map((c) => <col key={c} width="120" />)}
              <col />
            </colgroup>
            <thead>
              <tr>
                <CornerHead>
                  <svg width="21" height="21" viewBox="0 0 21 21" fill="#b4b4b4"><path d="M21 0v21H0z" /></svg>
                </CornerHead>
                {columns.map((c) => <ColumnHead key={c} $on={c === "A"}>{c}</ColumnHead>)}
                <ColumnHead />
              </tr>
            </thead>
            <tbody>
              {rowNumbers.map((n) => (
                <tr key={n}>
                  <RowHead $on={n === 2}>{n}</RowHead>
                  {n === 1 ? <TextCell>Encabezado1</TextCell> : n === 2 ? <ActiveCell>5436</ActiveCell> : <td />}
                  {columns.map((c) => <td key={c} />)}
                </tr>
              ))}
            </tbody>
          </Grid>
        </GridFrame>
        <VScroll>
          <ScrollButton aria-label="Arriba"><Tri dir="up" /></ScrollButton>
          <VThumb />
          <Track $grow={73} />
          <ScrollButton aria-label="Abajo"><Tri dir="down" /></ScrollButton>
        </VScroll>
      </SheetArea>

      <TabBar>
        <SheetNav>
          <Tri dir="left" color="#bdbdbd" size={12} />
          <Tri dir="right" color="#bdbdbd" size={12} />
        </SheetNav>
        <SheetTab>Hoja3</SheetTab>
        <SheetTab $active>Hoja4</SheetTab>
        <StripActions>
          <BarGrip $m={0} />
          <HScroll>
            <ScrollButton aria-label="Izquierda"><Tri dir="left" /></ScrollButton>
            <HThumb />
            <Track $grow={46} />
            <ScrollButton aria-label="Derecha"><Tri dir="right" /></ScrollButton>
          </HScroll>
        </StripActions>
      </TabBar>

      <StatusBar>
        <StatusText>Listo</StatusText>
        <MacroIcon />
        <Views>
          <ViewButton $on aria-label="Normal">
            <svg width="20" height="20" viewBox="0 0 20 20" fill="none" stroke="#444" strokeWidth="1.500"><path d="M1 1h18v18H1zM7 1v18M13 1v18M1 7h18M1 13h18" /></svg>
          </ViewButton>
          <ViewButton aria-label="Diseño de página">
            <svg width="22" height="20" viewBox="0 0 22 20" fill="none" stroke="#444" strokeWidth="1.500"><path d="M1 1h20v18H1zM5 4h12v12H5zM7 7h8M7 10h8M7 13h8" /></svg>
          </ViewButton>
          <ViewButton aria-label="Vista previa de salto de página">
            <svg width="22" height="20" viewBox="0 0 22 20" fill="none" stroke="#444" strokeWidth="1.500"><path d="M1 1h20v18H1zM1 12h13V1M8 1v11" /></svg>
          </ViewButton>
        </Views>
        <button aria-label="Alejar">
          <svg width="12" height="12" viewBox="0 0 12 12" stroke="#444" strokeWidth="1.500"><path d="M0 6h12" /></svg>
        </button>
        <ZoomRange type="range" aria-label="Zoom" min={0} max={100} defaultValue={50} />
        <button aria-label="Acercar">
          <svg width="12" height="12" viewBox="0 0 12 12" stroke="#444" strokeWidth="1.500"><path d="M0 6h12M6 0v12" /></svg>
        </button>
        <ZoomValue>100 %</ZoomValue>
      </StatusBar>

      <FormatDialog />
      <Ring $x={33} $y={415} $w={151} $h={48} $r={18} $color="#ed1c24" />
      <Ring $x={243} $y={353} $w={203} $h={40} $r={16} $color="#ed1c24" />
      <Ring $x={466} $y={311} $w={549} $h={445} $r={43} $color="#3f48cc" />
    </Page>
  );
}
